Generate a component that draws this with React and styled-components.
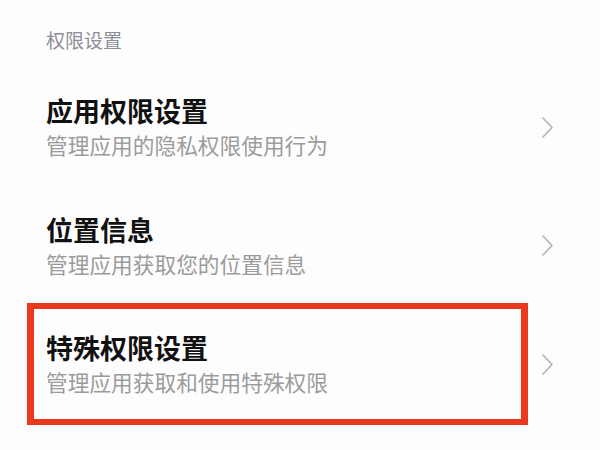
import styled, { createGlobalStyle } from 'styled-components'

const GlobalStyle = createGlobalStyle`
  html, body {
    margin: 0;
    padding: 0;
    background: #fdfdfd;
    font-family: "Noto Sans CJK SC", "Noto Sans", sans-serif;
  }
`

const Page = styled.div`
  width: 600px;
  height: 450px;
  overflow: hidden;
  background: #fdfdfd;
`

const SectionTitle = styled.div`
  height: 68px;
  box-sizing: border-box;
  padding: 27px 0 0 46px;
  font-size: 19px;
  line-height: 25px;
  color: #8d8e98;
`

const Row = styled.div`
  position: relative;
  height: 118.5px;
  display: flex;
  align-items: center;
  padding: 0 47px 0 46px;
`

const Texts = styled.div`
  flex: 1;
  display: flex;
  flex-direction: column;
  gap: 2px;
`

const Title = styled.div`
  font-size: 27px;
  line-height: 34px;
  font-weight: 700;
  color: #111;
`

const Subtitle = styled.div`
  font-size: 21.7px;
  line-height: 30px;
  color: #9b9b9b;
`

const Mark = styled.div`
  position: absolute;
  left: 27px;
  right: 72px;
  top: -2px;
  bottom: -1.5px;
  border-style: solid;
  border-color: #ea3a1e;
  border-width: 6px 7px;
  pointer-events: none;
`

const Chevron = () => (
  <svg width="11" height="21" viewBox="0 0 11 21">
    <polyline
      points="1,1 10,10.5 1,20"
      fill="none"
      stroke="#b3b3b3"
      strokeWidth="1.6"
      strokeLinecap="round"
      strokeLinejoin="round"
    />
  </svg>
)

const items = [
  { title: '应用权限设置', sub: '管理应用的隐私权限使用行为' },
  { title: '位置信息', sub: '管理应用获取您的位置信息' },
  { title: '特殊权限设置', sub: '管理应用获取和使用特殊权限', marked: true },
]

export default function App() {
  return (
    <Page>
      <GlobalStyle />
      <SectionTitle>权限设置</SectionTitle>
      {items.map((it) => (
        <Row key={it.title}>
          <Texts>
            <Title>{it.title}</Title>
            <Subtitle>{it.sub}</Subtitle>
          </Texts>
          <Chevron />
          {it.marked && <Mark />}
        </Row>
      ))}
    </Page>
  )
}
